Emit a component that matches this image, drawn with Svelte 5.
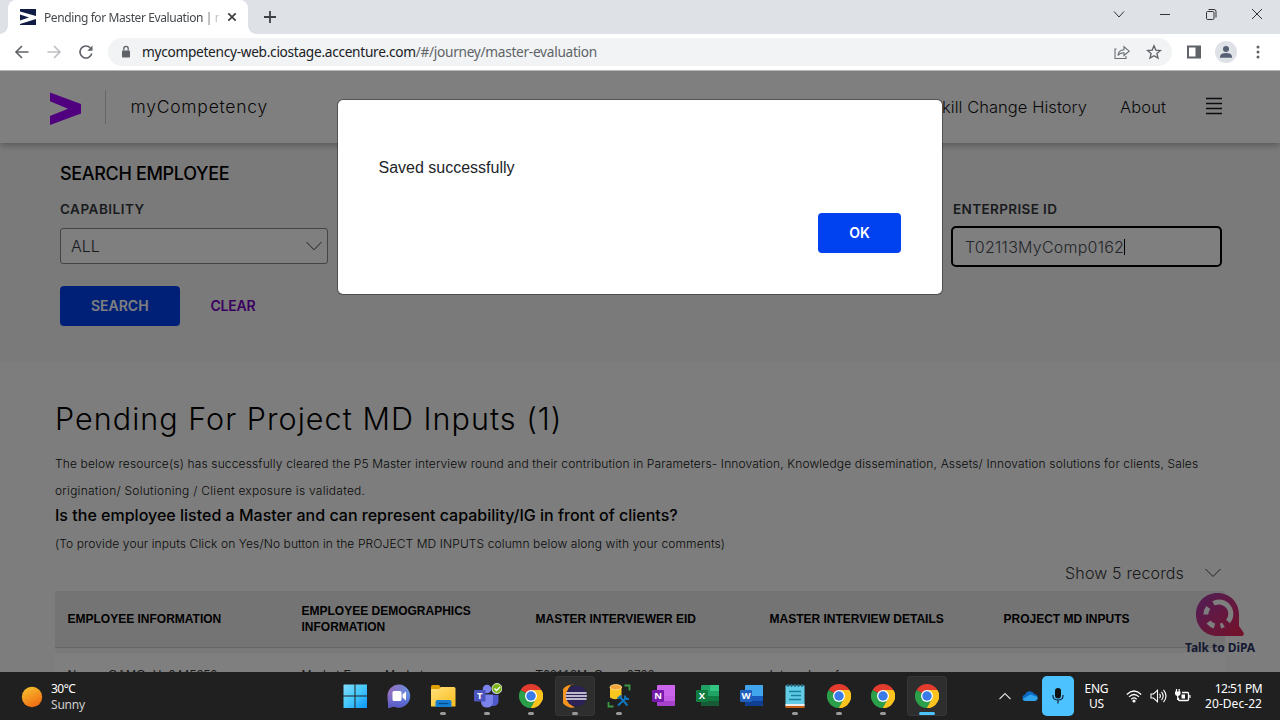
<script>
  const apps = [
    { id: 'start' }, { id: 'chat' }, { id: 'files', open: true }, { id: 'teams', open: true },
    { id: 'chrome', open: true }, { id: 'eclipse', open: true, active: true }, { id: 'sql', open: true },
    { id: 'onenote' }, { id: 'excel' }, { id: 'word' }, { id: 'notepad', open: true },
    { id: 'chrome', open: true }, { id: 'chrome', open: true }, { id: 'chrome', open: true, active: true, focused: true }
  ];
  const columns = [
    ['EMPLOYEE INFORMATION', 'Name: GAMO_Ho9445250'],
    ['EMPLOYEE DEMOGRAPHICS INFORMATION', 'Market Focus: Market'],
    ['MASTER INTERVIEWER EID', 'T02113MyComp0722'],
    ['MASTER INTERVIEW DETAILS', 'Interval conf'],
    ['PROJECT MD INPUTS', '']
  ];
</script>

{#snippet office(letter, c1, c2, c3, c4, badge)}
  <svg width="24" height="24" viewBox="0 0 24 24">
    <rect x="6" y="1" width="18" height="21" rx="1.2" fill={c1} />
    <rect x="15" y="1" width="9" height="6" fill={c2} />
    <rect x="6" y="12" width="18" height="5" fill={c3} />
    <path d="M6 17h18v3.800q0 1.200-1.200 1.200H7.200Q6 22 6 20.800z" fill={c4} />
    <rect x="1" y="6" width="12" height="12" rx="1" fill={badge} />
    <text x="7" y="15.400" text-anchor="middle" class="glyph">{letter}</text>
  </svg>
{/snippet}

<div class="screen">
  <header class="tabs">
    <div class="tab">
      <svg class="fav" width="16" height="16" viewBox="0 0 16 16"><rect width="16" height="16" fill="#101c46" /><path d="M0 2.500 16 7v3L0 15v-3.500L9 8.500 0 5.500z" fill="#fff" /></svg>
      <span class="tabtitle">Pending for Master Evaluation | my</span>
      <svg width="16" height="16" viewBox="0 0 16 16" fill="none" stroke="#3c4043" stroke-width="1.700"><path d="m4.300 4.300 7.400 7.400m0-7.400-7.400 7.400" /></svg>
    </div>
    <svg class="plus" width="16" height="16" viewBox="0 0 16 16" stroke="#3c4043" stroke-width="1.800"><path d="M8 2v12M2 8h12" /></svg>
    <div class="win">
      <svg viewBox="0 0 16 16"><path d="m3 5.500 5 5.500 5-5.500" /></svg>
      <svg viewBox="0 0 16 16"><path d="M3 8.500h10" /></svg>
      <svg viewBox="0 0 16 16"><rect x="3.500" y="5.500" width="7.500" height="8" rx="1.200" /><path d="M5.500 3.500h5.500q2 0 2 2v6" /></svg>
      <svg viewBox="0 0 16 16"><path d="m3 3 10 10M13 3 3 13" /></svg>
    </div>
  </header>

  <nav class="toolbar">
    <svg class="nav" viewBox="0 0 16 16" stroke="#5f6368"><path d="M14.500 8H2.500m5.500-6L2 8l6 6" /></svg>
    <svg class="nav" viewBox="0 0 16 16" stroke="#bcbec1"><path d="M1.500 8h12M8 2l6 6-6 6" /></svg>
    <svg class="nav" viewBox="0 0 16 16" stroke="#5f6368"><path d="M13.800 9.500A6 6 0 1 1 12.300 3.800" /><path d="M14.500 1.500v5.200H9.300z" fill="#5f6368" stroke="none" /></svg>
    <div class="omni">
      <svg width="12" height="14" viewBox="0 0 12 14"><rect x="2" y="5.500" width="8" height="7" rx=".8" fill="#5f6368" /><path d="M3.800 5.500V3.600a2.200 2.200 0 0 1 4.400 0v1.900" fill="none" stroke="#5f6368" stroke-width="1.300" /></svg>
      <span class="url"><b>mycompetency-web.ciostage.accenture.com</b>/#/journey/master-evaluation</span>
      <svg width="16" height="16" viewBox="0 0 16 16" fill="none" stroke="#6a6e73" stroke-width="1.100"><path d="M2.500 5H1v9.500h11V12" /><path d="M4 11.500q.5-5.500 6-5.700V2.800l5.200 4.400L10 11.500V8.700q-4-.2-6 2.800z" /></svg>
      <svg width="16" height="16" viewBox="0 0 16 16" fill="none" stroke="#5f6368" stroke-width="1.300"><path d="m8 1.800 1.800 4.300 4.700.4-3.600 3 1.100 4.600L8 11.700l-4 2.400 1.100-4.600-3.600-3 4.700-.4z" /></svg>
    </div>
    <svg class="panel" width="16" height="16" viewBox="0 0 16 16"><path fill="#5f6368" fill-rule="evenodd" d="M1 1.500h14v13H1zM3 3.500v9h6.500v-9z" /></svg>
    <svg class="avatar" width="22" height="22" viewBox="0 0 22 22"><circle cx="11" cy="11" r="11" fill="#dee1e6" /><circle cx="11" cy="8" r="3" fill="#566074" /><path d="M5 16q0-4 6-4t6 4v.8H5z" fill="#566074" /></svg>
    <svg class="dots" width="16" height="16" viewBox="0 0 16 16" fill="#5f6368"><circle cx="8" cy="3" r="1.500" /><circle cx="8" cy="8" r="1.500" /><circle cx="8" cy="13" r="1.500" /></svg>
  </nav>

  <main>
    <div class="sitebar">
      <svg class="logo" width="32" height="33" viewBox="0 0 32 33"><path d="M0 .5 31 12v9.500L0 33V24l18-7.200L0 9.200z" fill="#a100ff" /></svg>
      <div class="brand">myCompetency</div>
      <div class="links"><span class="skill">Skill Change History</span><span class="about">About</span></div>
      <svg class="burger" width="16" height="18" viewBox="0 0 16 18" stroke="#1b1720" stroke-width="1.700"><path d="M0 1.500h16M0 6.500h16M0 11.500h16M0 16.500h16" /></svg>
    </div>

    <section class="search">
      <h2>SEARCH EMPLOYEE</h2>
      <div class="fields">
        <div class="field">
          <label for="cap" class="lcap">CAPABILITY</label>
          <div class="select" id="cap"><span>ALL</span><svg width="16" height="10" viewBox="0 0 16 10"><path d="m.5 1 7.500 7.800L15.500 1" fill="none" stroke="#444" /></svg></div>
        </div>
        <div class="field wide">
          <label for="eid" class="leid">ENTERPRISE ID</label>
          <div class="input" id="eid"><span>T02113MyComp0162</span><i></i></div>
        </div>
      </div>
      <div class="actions"><button class="primary">SEARCH</button><span class="clear">CLEAR</span></div>
    </section>

    <section class="pending">
      <h1>Pending For Project MD Inputs (1)</h1>
      <p class="intro"><span class="l1">The below resource(s) has successfully cleared the P5 Master interview round and their contribution in Parameters- Innovation, Knowledge dissemination, Assets/ Innovation solutions for clients, Sales</span><br /><span class="l2">origination/ Solutioning / Client exposure is validated.</span></p>
      <h3>Is the employee listed a Master and can represent capability/IG in front of clients?</h3>
      <p class="note">(To provide your inputs Click on Yes/No button in the PROJECT MD INPUTS column below along with your comments)</p>
      <div class="records"><span>Show 5 records</span><svg width="16" height="10" viewBox="0 0 16 10"><path d="m.5 1 7.500 7.500L15.500 1" fill="none" stroke="#444" /></svg></div>
      <div class="table">
        <div class="row head">{#each columns as col}<div>{col[0]}</div>{/each}</div>
        <div class="row data">{#each columns as col}<div>{col[1]}</div>{/each}</div>
      </div>
    </section>

    <div class="dipa">
      <svg width="50" height="44" viewBox="0 0 50 44">
        <defs><linearGradient id="dg" x1="0" y1="0" x2="1" y2="1"><stop offset="0" stop-color="#a03cb0" /><stop offset=".5" stop-color="#c83080" /><stop offset="1" stop-color="#ea2250" /></linearGradient></defs>
        <path d="M22.500 0C10 0 1 9.500 1 21.500S10 43 22.500 43H47q2.500-1 1.500-3.500L44 33V21.500C44 9.500 35 0 22.500 0z" fill="url(#dg)" />
        <g fill="none" stroke="#fff" stroke-width="5"><path d="M18.500 10.400A11.800 11.800 0 0 1 33 28.500" /><path d="M13.300 14.500a11.300 11.300 0 0 0-2.400 7" /><path d="M13.500 29a11.300 11.300 0 0 0 6 4" /><path d="M25.500 33a11 11 0 0 0 3-1.200" /></g>
      </svg>
      <span>Talk to DiPA</span>
    </div>

    <div class="shade">
      <div class="modal"><p>Saved successfully</p><button>OK</button></div>
    </div>
  </main>

  <footer>
    <div class="weather">
      <svg width="22" height="22" viewBox="0 0 22 22"><defs><linearGradient id="sun" x1=".2" y1="0" x2=".7" y2="1"><stop stop-color="#f6c02f" /><stop offset="1" stop-color="#f06a12" /></linearGradient></defs><circle cx="11" cy="11" r="10.200" fill="url(#sun)" /></svg>
      <div><span class="temp">30°C</span><br /><span class="sunny">Sunny</span></div>
    </div>
    <div class="apps">
      {#each apps as app}
        <div class="app" class:active={app.active}>
          {#if app.id === 'start'}
            <svg width="24" height="24" viewBox="0 0 24 24"><defs><linearGradient id="wg" gradientUnits="userSpaceOnUse" x1="0" y1="0" x2="24" y2="24"><stop stop-color="#84ddfb" /><stop offset=".5" stop-color="#45c8fb" /><stop offset="1" stop-color="#0a95fb" /></linearGradient></defs><path fill="url(#wg)" d="M1 .5h10.500v11H.5V1zM12.500.5H24v11H12.500zM.5 12.500h11V24H.5zM12.500 12.500H24V24H12.500z" /></svg>
          {:else if app.id === 'chat'}
            <svg width="24" height="24" viewBox="0 0 24 24"><defs><linearGradient id="cg" x1="0" y1="0" x2="1" y2=".3"><stop stop-color="#9a69b5" /><stop offset="1" stop-color="#6590e4" /></linearGradient><linearGradient id="cg2" x1="0" y1="0" x2="0" y2="1"><stop offset=".4" stop-color="#5558c8" stop-opacity="0" /><stop offset="1" stop-color="#5558c8" /></linearGradient></defs><path d="M12 .5A11.500 11.500 0 1 1 7 22.500L1 24V19Q.5 15 .5 12A11.500 11.500 0 0 1 12 .5z" fill="url(#cg)" /><path d="M12 .5A11.500 11.500 0 1 1 7 22.500L1 24V19Q.5 15 .5 12A11.500 11.500 0 0 1 12 .5z" fill="url(#cg2)" /><rect x="5.500" y="7" width="9" height="10" rx="1.500" fill="#fff" /><path d="m15.500 10.500 3.500-3v9l-3.500-3z" fill="#fff" /></svg>
          {:else if app.id === 'files'}
            <svg width="26" height="24" viewBox="0 0 26 24"><defs><linearGradient id="fg" x1="0" y1="0" x2="1" y2="1"><stop stop-color="#ffe07a" /><stop offset="1" stop-color="#fbbd1d" /></linearGradient></defs><path d="M1 2.500q0-1.500 1.500-1.500H9l2 3v4H1z" fill="#dfa006" /><path d="M1 5h8l2-2h13q1.500 0 1.500 1.500v18H1z" fill="url(#fg)" /><path d="M5.500 23v-5q0-2 2-2h12q2 0 2 2v5z" fill="#137ed2" /><path d="M8.500 19.500h10" stroke="#0c4c86" stroke-width="1.300" /></svg>
          {:else if app.id === 'teams'}
            <svg width="30" height="26" viewBox="0 0 30 26"><circle cx="15" cy="6" r="4.300" fill="#7b83eb" /><circle cx="23" cy="8" r="3" fill="#5059c9" /><path d="M18 12h8.500v7q-1 4-5 4H18z" fill="#5059c9" /><path d="M10 11.500h11V19q-.5 5.500-6 5.500T9 19z" fill="#7b83eb" /><rect x="2" y="7" width="11.500" height="11.500" rx="1" fill="#4b53bc" /><text x="7.700" y="16" text-anchor="middle" class="glyph">T</text><circle cx="25" cy="5.500" r="5" fill="#7cb518" stroke="#fff" stroke-width=".8" /><path d="m22.500 5.500 2 2 3.500-3.500" fill="none" stroke="#fff" stroke-width="1.300" /></svg>
          {:else if app.id === 'chrome'}
            <svg width="24" height="24" viewBox="0 0 48 48"><path d="M24 24 3.200 12a24 24 0 0 1 41.600 0z" fill="#e33b2e" /><path d="M24 24h20.800V12a24 24 0 0 1-20.800 36z" fill="#fcc31e" /><path d="m24 24 10 6L24 48A24 24 0 0 1 3.200 12z" fill="#2c9f4b" /><path d="M24 12h20.800A24 24 0 0 1 24 48l10.400-18z" fill="#fcc31e" /><circle cx="24" cy="24" r="12" fill="#fff" /><circle cx="24" cy="24" r="9.500" fill="#3a7be9" /></svg>
          {:else if app.id === 'eclipse'}
            <svg width="24" height="24" viewBox="0 0 24 24"><path d="M12 1A11.500 11.500 0 1 0 12 23.300 14 14 0 0 1 8 1z" fill="#f7941e" /><circle cx="13.300" cy="12" r="10.500" fill="#2c2255" /><path d="M3 9h20.500M2.500 12h21.500M3 15h20.500" stroke="#eeeaf6" stroke-width="1.700" /></svg>
          {:else if app.id === 'sql'}
            <svg width="26" height="26" viewBox="0 0 26 26"><path d="M4 4v10.500q4.500 3.500 11.500 0V4z" fill="#fbc520" /><ellipse cx="9.800" cy="4.200" rx="5.800" ry="2.600" fill="#f4a23b" stroke="#ffe28a" stroke-width=".8" /><path d="M18.500 2.500h5v5M2.500 19v4.500h5" fill="none" stroke="#3c9a45" stroke-width="1.800" /><path d="m12 22.500 8.500-8M14 14l7.500 8.500" stroke="#1176bd" stroke-width="2" /><path d="m11.500 15.500 4-3M18.800 12.500q0 4 4.200 3.500" stroke="#1176bd" stroke-width="2" fill="none" /></svg>
          {:else if app.id === 'onenote'}
            {@render office('N', '#ca64ea', '#ca64ea', '#c25ce4', '#a842cd', '#7719aa')}
          {:else if app.id === 'excel'}
            {@render office('X', '#21a366', '#33c481', '#107c41', '#185c37', '#107c41')}
          {:else if app.id === 'word'}
            {@render office('W', '#41a5ee', '#41a5ee', '#185abd', '#103f91', '#2260bd')}
          {:else}
            <svg width="22" height="26" viewBox="0 0 22 26"><rect x="1.500" y="2.500" width="19" height="20" fill="#62cbe6" /><path d="M1.500 21h19v2.500h-19z" fill="#eee" /><path d="M1.500 23h19v2h-19z" fill="#c45d12" /><path d="M4 1v3M7.500 1v3M11 1v3M14.500 1v3M18 1v3" stroke="#236b84" stroke-width="1.500" /><path d="M5 8.500h12M7 12.500h10M5 16.500h12" stroke="#14819f" stroke-width="1.700" /></svg>
          {/if}
          {#if app.open}<i class:focused={app.focused}></i>{/if}
        </div>
      {/each}
    </div>
    <div class="tray">
      <svg class="up" width="14" height="14" viewBox="0 0 14 14"><path d="m1.500 10 5.500-5.500 5.500 5.500" fill="none" stroke="#ddd" stroke-width="1.100" /></svg>
      <svg class="cloud" width="16" height="12" viewBox="0 0 16 12"><path d="M3.500 11A3.300 3.300 0 0 1 3.200 4.500 5 5 0 0 1 12.300 4 3.600 3.600 0 0 1 13 11z" fill="#0f6cc4" /><path d="M3.500 11q-2 0-3-1.800L8.500 4.500l6.700 2.300Q16.600 10 13 11z" fill="#2fa4ea" /></svg>
      <div class="mic"><svg width="16" height="18" viewBox="0 0 16 18"><rect x="5" y="1" width="6" height="10.500" rx="3" fill="#111" /><path d="M3 8v1.500Q3.500 13 8 13t5-3.500V8M8 13v3.500" fill="none" stroke="#123" stroke-width="1.200" /></svg></div>
      <div class="lang"><span>ENG</span><span>US</span></div>
      <svg class="wifi" width="16" height="16" viewBox="0 0 16 16" fill="none" stroke="#fff" stroke-width="1.200"><path d="M.8 6.500Q8-.5 15.200 6.500M3 8.900q5-4.800 10 0M5.300 11.200q2.700-2.500 5.400 0" /><circle cx="8" cy="13" r="1" fill="#fff" /></svg>
      <svg class="vol" width="17" height="16" viewBox="0 0 17 16" fill="none" stroke="#fff" stroke-width="1.100"><path d="M1 6h2.500L7.500 2.200v11.600L3.500 10H1zM9.500 5.800q1.800 2.200 0 4.400M11.500 3.800q3.300 4.200 0 8.400M13.500 1.800q5 6.200 0 12.400" /></svg>
      <svg class="bat" width="17" height="16" viewBox="0 0 17 16"><path d="M8 4.500h5.500q1 0 1 1v6q0 1-1 1h-8q-1 0-1-1V10" fill="none" stroke="#fff" stroke-width="1.300" /><rect x="7.500" y="6.500" width="3.500" height="4" fill="#fff" /><path d="M15.300 7h1.200v3h-1.200zM1 3.500h5.500V6Q6 8 3.700 8T1 6z" fill="#fff" /><path d="M2.500 1v3M5.200 1v3M3.700 7v5" stroke="#fff" stroke-width="1.200" /></svg>
      <div class="clock"><span class="time">12:51 PM</span><span class="date">20-Dec-22</span></div>
    </div>
  </footer>
</div>

<style>
  :global(body) { margin: 0; overflow: hidden; }
  * { box-sizing: border-box; }
  svg { flex: none; display: block; }
  h1, h2, h3, p { margin: 0; }
  .screen { width: 1280px; height: 720px; display: flex; flex-direction: column; overflow: hidden; font-family: Inter, "Liberation Sans", sans-serif; white-space: nowrap; }
  .tabs { height: 34px; flex: none; display: flex; align-items: center; background: #dee1e6; padding-left: 8px; }
  .tab { width: 240px; height: 34px; border-radius: 8px 8px 0 0; background: #fff; display: flex; align-items: center; padding-left: 12px; position: relative; }
  .tab::before, .tab::after { content: ""; position: absolute; bottom: 0; width: 8px; height: 8px; }
  .tab::before { left: -8px; background: radial-gradient(circle at 0 0, transparent 7.500px, #fff 8px); }
  .tab::after { right: -8px; background: radial-gradient(circle at 100% 0, transparent 7.500px, #fff 8px); }
  .tabtitle { margin: 0 5px 0 8px; width: 175px; overflow: hidden; font: 12px "Noto Sans", sans-serif; color: #45494d; letter-spacing: -.4px; -webkit-mask-image: linear-gradient(90deg, #000 160px, transparent 179px); mask-image: linear-gradient(90deg, #000 160px, transparent 179px); }
  .plus { margin-left: 14px; }
  .win { margin-left: auto; display: flex; height: 28px; align-items: center; align-self: flex-start; }
  .win svg { width: 16px; height: 16px; margin: 0 15px; fill: none; stroke: #333; stroke-width: 1; }
  .toolbar { height: 37px; flex: none; background: #fff; display: flex; align-items: center; padding: 0 0 1px 14px; border-bottom: 1px solid #b5b7b9; }
  .nav { width: 16px; height: 16px; margin-right: 16px; fill: none; stroke-width: 1.600; }
  .omni { width: 1064px; height: 28px; margin-left: -2px; border-radius: 14px; background: #f1f3f4; display: flex; align-items: center; padding: 0 10px 0 12px; gap: 16px; }
  .url { margin-left: -6px; flex: 1; font: 13.700px "Noto Sans", sans-serif; color: #5f6368; letter-spacing: -.3px; }
  .url b { font-weight: 400; color: #202124; }
  .panel { margin-left: 14px; }
  .avatar { margin-left: 13px; }
  .dots { margin-left: 13px; }

  main { height: 601px; flex: none; position: relative; overflow: hidden; background: #fbfbfb; color: #000; }
  .sitebar { height: 72px; background: #fff; display: flex; align-items: center; padding: 0 58px 0 50px; box-shadow: 0 2px 7px rgba(0,0,0,.3); position: relative; font-size: 17px; font-weight: 350; color: #111; }
  .logo { margin-top: 3px; }
  .brand { margin-left: 23px; height: 34px; line-height: 34px; border-left: 1px solid #ccc; padding-left: 24.500px; font-size: 17.500px; letter-spacing: .75px; }
  .links { display: flex; margin-left: auto; font-size: 16.500px; }
  .skill { letter-spacing: .05px; margin-right: 33px; }
  .about { letter-spacing: .1px; }
  .burger { margin-left: 40px; margin-top: -3px; }

  .search { height: 219px; padding: 19px 58px 0 60px; background: #f5f5f5; }
  h2 { font-size: 18px; line-height: 22px; font-weight: 500; letter-spacing: -.33px; position: relative; top: 1px; }
  .fields { display: flex; justify-content: space-between; margin-top: 16px; }
  .field { width: 268px; color: #33383e; }
  .wide { width: 271px; }
  label { display: block; font-size: 13.500px; line-height: 18px; font-weight: 600; }
  .lcap { letter-spacing: .5px; }
  .leid { letter-spacing: .38px; padding-left: 2px; }
  .select { height: 36px; margin-top: 10px; border: 1px solid #888; border-radius: 3px; background: #fff; display: flex; align-items: center; justify-content: space-between; padding: 0 5px 0 10px; font-size: 16px; font-weight: 300; }
  .input { height: 41px; margin-top: 8px; border: 2px solid #000; border-radius: 5px; background: #fff; display: flex; align-items: center; padding-left: 12px; font-size: 16px; font-weight: 300; color: #484c55; letter-spacing: .24px; }
  .input i { width: 1px; height: 16px; background: #000; }
  .actions { display: flex; align-items: center; margin-top: 19px; }
  button { font: 600 14px Inter, sans-serif; color: #fff; background: #0041f0; border: 0; padding: 0 0 1px; border-radius: 4px; height: 40px; }
  .primary { width: 119.500px; letter-spacing: 0; }
  .clear { margin-left: 31px; padding-bottom: 2px; font-size: 14px; font-weight: 600; letter-spacing: -.2px; color: #7500c0; }

  .pending { padding: 38px 55px 0; }
  h1 { font-size: 30.500px; line-height: 38px; font-weight: 300; letter-spacing: 1.040px; }
  .intro { margin-top: 12px; font-size: 12px; line-height: 26.700px; color: #111; font-weight: 350; position: relative; top: 1px; }
  .l1 { letter-spacing: .149px; }
  .l2 { letter-spacing: .26px; }
  h3 { font-size: 16px; line-height: 24px; font-weight: 500; letter-spacing: .01px; }
  .note { font-size: 12px; line-height: 20px; margin-top: 7px; color: #111; font-weight: 350; letter-spacing: .105px; }
  .records { display: flex; justify-content: flex-end; align-items: center; gap: 21px; height: 20px; margin-top: 9px; padding-right: 4px; font-size: 16px; font-weight: 300; color: #333; letter-spacing: .15px; }
  .table { margin-top: 8px; }
  .row { display: grid; grid-template-columns: repeat(5, 234px); align-items: center; }
  .row div { padding-left: 12.500px; }
  .head { height: 57px; background: #e8e8e8; border-bottom: 1px solid #ccc; font: 700 12px/16px "Liberation Sans", sans-serif; white-space: normal; box-shadow: 0 5px 0 #f3f3f3; }
  .data { height: 60px; margin-top: 5px; background: #fff; align-items: start; padding-top: 12px; font: 12px/20px "Liberation Sans", sans-serif; color: #333; letter-spacing: .3px; }
  .dipa { position: absolute; left: 1185px; top: 522px; width: 72px; }
  .dipa svg { margin-left: 10px; }
  .dipa span { display: block; margin-top: 3px; font: 700 12px/16px "Noto Sans", sans-serif; color: #2c3566; letter-spacing: -.05px; }
  .shade { position: absolute; inset: 0; background: rgba(0,0,0,.5); display: flex; align-items: flex-start; justify-content: center; padding-top: 28px; }
  .modal { width: 606px; height: 196px; background: #fff; background-clip: padding-box; border: 1px solid rgba(0,0,0,.35); border-radius: 6px; padding: 58px 41px 41px 40.500px; display: flex; flex-direction: column; justify-content: space-between; }
  .modal p { font: 16px/20px "Liberation Sans", sans-serif; color: #212529; }
  .modal button { width: 83px; align-self: flex-end; }

  footer { height: 48px; background: #202020; display: flex; align-items: center; color: #fff; font-family: "Noto Sans", sans-serif; font-size: 12px; }
  .weather { width: 332px; padding-left: 21px; display: flex; align-items: center; gap: 8px; line-height: 16px; padding-top: 2px; }
  .temp { letter-spacing: -.5px; }
  .sunny { color: #ccc; letter-spacing: -.2px; }
  .apps { display: flex; gap: 4.040px; padding-left: 2.500px; }
  .app { width: 40px; height: 40px; border-radius: 4px; display: flex; align-items: center; justify-content: center; position: relative; }
  .active { background: #2e2e2e; box-shadow: inset 0 0 0 1px #353535; }
  .app i { position: absolute; bottom: 1px; width: 6px; height: 3px; border-radius: 2px; background: #9a9a9a; }
  .app i.focused { width: 16px; background: #4cc2ff; }
  .glyph { font: 700 9.500px "Open Sans", sans-serif; fill: #fff; }
  .tray { flex: 1; display: flex; align-items: center; padding: 0 18px 0 51.500px; }
  .cloud { margin-left: 10px; }
  .mic { margin-left: 4px; width: 32px; height: 40px; border-radius: 5px; background: #4cc2ff; display: flex; align-items: center; justify-content: center; }
  .lang, .clock { display: flex; flex-direction: column; line-height: 15.500px; align-items: center; }
  .lang { margin-left: 10px; width: 24px; letter-spacing: -.3px; }
  .wifi { margin-left: 18px; }
  .vol { margin-left: 8px; }
  .bat { margin-left: 7px; }
  .clock { margin-left: auto; align-items: flex-end; }
  .time { letter-spacing: -.6px; }
  .date { letter-spacing: .05px; }
</style>
